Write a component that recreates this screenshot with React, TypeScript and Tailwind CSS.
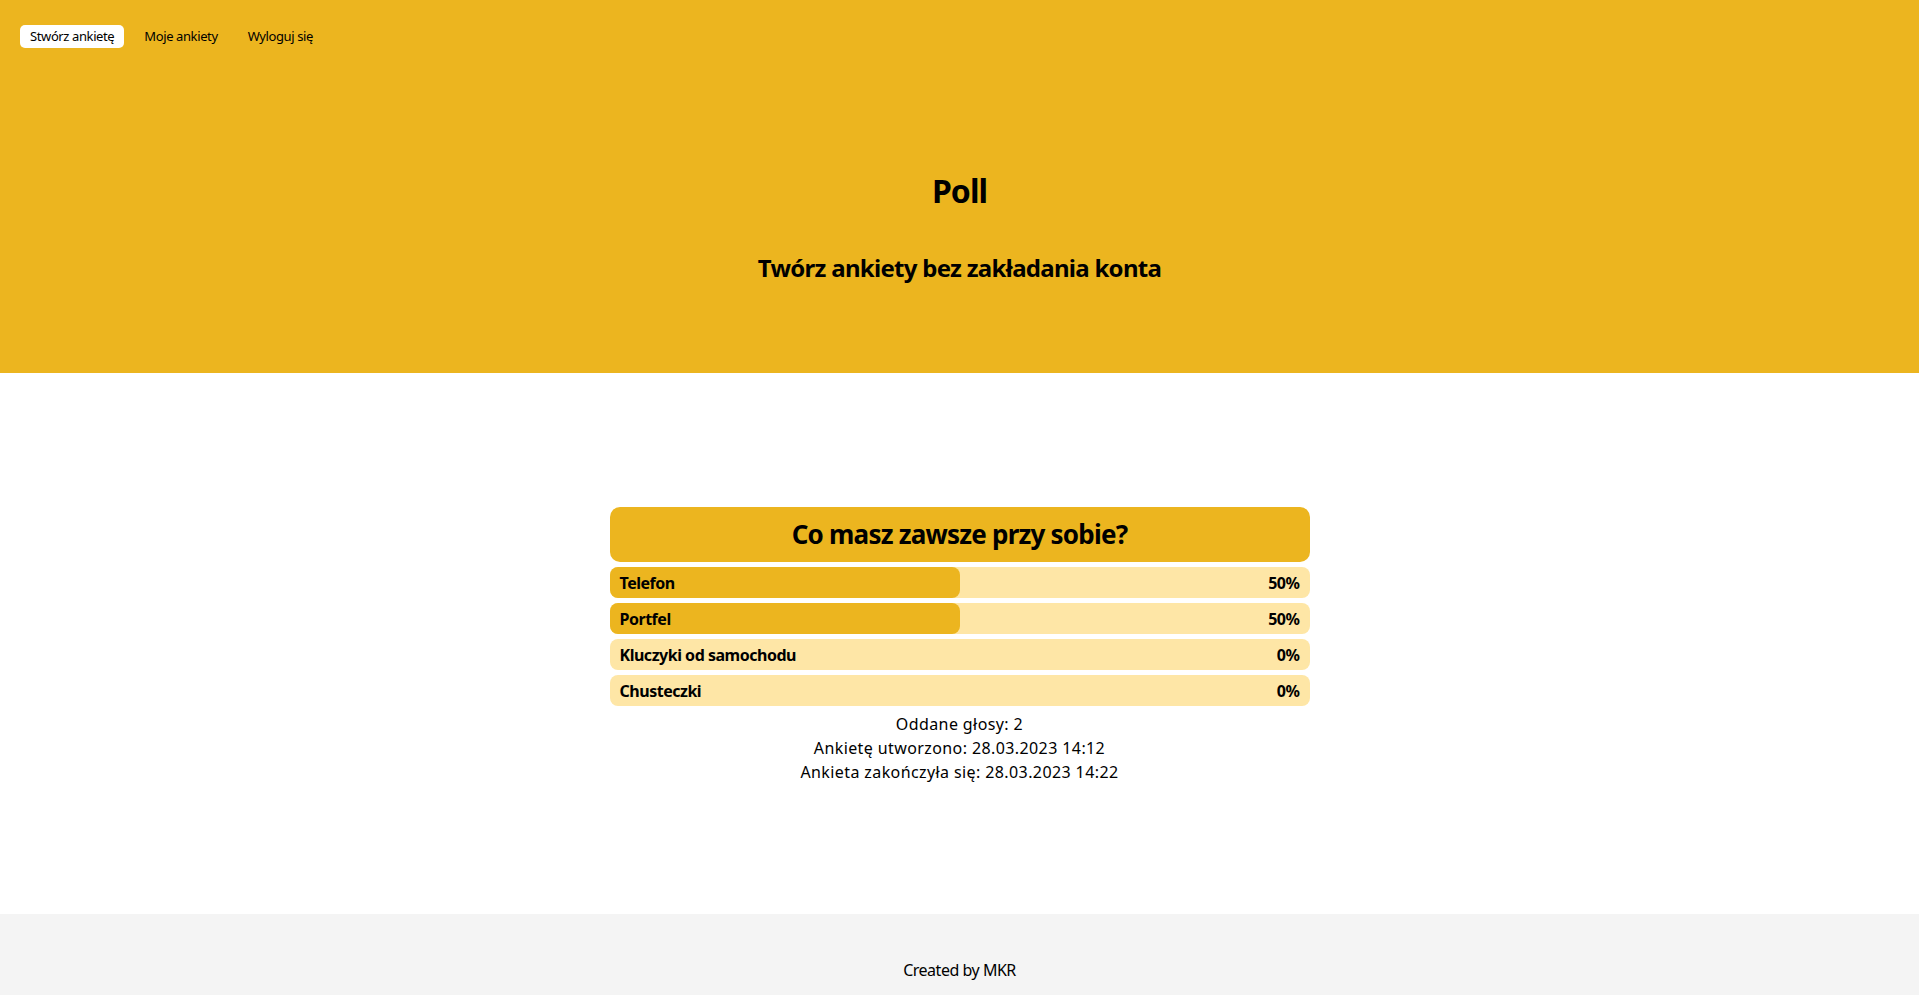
const options = [
  { label: "Telefon", pct: 50 },
  { label: "Portfel", pct: 50 },
  { label: "Kluczyki od samochodu", pct: 0 },
  { label: "Chusteczki", pct: 0 },
];

function Nav() {
  return (
    <nav className="flex gap-[10px] pl-5 pt-[25px] text-[13px] leading-[23px] tracking-[-0.03em]">
      <a className="rounded-[5px] bg-white px-[10px]">Stwórz ankietę</a>
      <a className="px-[10px]">Moje ankiety</a>
      <a className="px-[10px]">Wyloguj się</a>
    </nav>
  );
}

function OptionRow({ label, pct }: { label: string; pct: number }) {
  return (
    <div className="grid h-[31px] rounded-lg bg-[#fee6a6]">
      <div
        className="col-start-1 row-start-1 rounded-lg bg-[#ecb51f]"
        style={{ width: `${pct}%` }}
      ></div>
      <div className="col-start-1 row-start-1 flex items-center justify-between px-[10px] text-base font-bold tracking-[-0.03em]">
        <span>{label}</span>
        <span>{pct}%</span>
      </div>
    </div>
  );
}

export default function App() {
  return (
    <div className="flex flex-col font-['Noto_Sans',sans-serif] text-black">
      <header className="h-[373px] bg-[#ecb51f]">
        <Nav />
        <h1 className="mt-[123px] text-center text-[32px] font-bold leading-[40px] tracking-[-0.03em]">
          Poll
        </h1>
        <h2 className="mt-[41px] text-center text-2xl font-bold leading-8 tracking-[-0.03em]">
          Twórz ankiety bez zakładania konta
        </h2>
      </header>
      <main className="flex h-[541px] justify-center pt-[134px]">
        <div className="flex w-[700px] flex-col gap-[5px]">
          <div className="flex h-[55px] items-center justify-center rounded-[10px] bg-[#ecb51f] text-[26px] font-bold tracking-[-0.03em]">
            Co masz zawsze przy sobie?
          </div>
          {options.map((o) => (
            <OptionRow key={o.label} label={o.label} pct={o.pct} />
          ))}
          <div className="mt-[1px] text-center text-base leading-6 tracking-[0.025em]">
            <p>Oddane głosy: 2</p>
            <p>Ankietę utworzono: 28.03.2023 14:12</p>
            <p>Ankieta zakończyła się: 28.03.2023 14:22</p>
          </div>
        </div>
      </main>
      <footer className="flex h-[81px] justify-center bg-[#f4f4f4] pt-[44px] text-base leading-6 tracking-[-0.03em]">
        Created by MKR
      </footer>
    </div>
  );
}
